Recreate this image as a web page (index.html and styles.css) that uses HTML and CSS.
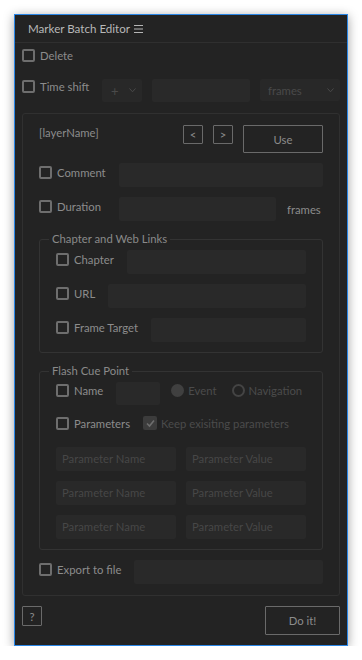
FILE: index.html
```html
<!DOCTYPE html>
<html>
<head>
<meta charset="utf-8">
<link rel="stylesheet" href="styles.css">
</head>
<body>
<div class="window">
  <div class="titlebar">
    <span class="title">Marker Batch Editor</span>
    <svg class="menu-icon" width="9" height="8" viewBox="0 0 9 8"><path d="M0 0.5H9M0 4H9M0 7.5H9" stroke="#b5b5b5" stroke-width="1"/></svg>
  </div>
  <div class="content">
    <div class="row row-delete"><span class="cb"></span><span class="lbl">Delete</span></div>
    <div class="row row-shift">
      <span class="cb"></span><span class="lbl lbl-shift">Time shift</span>
      <div class="dd dd-sign"><span>+</span><svg width="7" height="5" viewBox="0 0 7 5"><path d="M0.5 0.5L3.5 3.8L6.5 0.5" fill="none" stroke="#4a4a4a" stroke-width="1"/></svg></div>
      <div class="field field-shift"></div>
      <div class="dd dd-unit"><span>frames</span><svg width="7" height="5" viewBox="0 0 7 5"><path d="M0.5 0.5L3.5 3.8L6.5 0.5" fill="none" stroke="#4a4a4a" stroke-width="1"/></svg></div>
    </div>

    <div class="panel">
      <div class="head">
        <span class="layer">[layerName]</span>
        <button class="btn btn-sm">&lt;</button>
        <button class="btn btn-sm">&gt;</button>
        <button class="btn btn-use">Use</button>
      </div>
      <div class="frow"><span class="cb"></span><span class="lbl lbl-w">Comment</span><div class="field"></div></div>
      <div class="frow"><span class="cb"></span><span class="lbl lbl-w">Duration</span><div class="field field-dur"></div><span class="unit">frames</span></div>

      <fieldset class="group group-chapter">
        <legend>Chapter and Web Links</legend>
        <div class="frow first"><span class="cb"></span><span class="lbl">Chapter</span><div class="field"></div></div>
        <div class="frow"><span class="cb"></span><span class="lbl">URL</span><div class="field"></div></div>
        <div class="frow"><span class="cb"></span><span class="lbl">Frame Target</span><div class="field"></div></div>
      </fieldset>

      <fieldset class="group group-flash">
        <legend>Flash Cue Point</legend>
        <div class="frow first row-name">
          <span class="cb"></span><span class="lbl">Name</span><div class="field field-name"></div>
          <span class="radio radio-on"></span><span class="dis lbl-event">Event</span>
          <span class="radio radio-nav"></span><span class="dis lbl-nav">Navigation</span>
        </div>
        <div class="row row-params">
          <span class="cb"></span><span class="lbl">Parameters</span>
          <span class="cb-checked"><svg width="11" height="11" viewBox="0 0 11 11"><path d="M2 5.5L4.5 8L9 2.5" fill="none" stroke="#6e6e6e" stroke-width="1.6"/></svg></span>
          <span class="dis lbl-keep">Keep exisiting parameters</span>
        </div>
        <div class="params">
          <div class="field ph">Parameter Name</div><div class="field ph">Parameter Value</div>
          <div class="field ph">Parameter Name</div><div class="field ph">Parameter Value</div>
          <div class="field ph">Parameter Name</div><div class="field ph">Parameter Value</div>
        </div>
      </fieldset>

      <div class="frow row-export"><span class="cb"></span><span class="lbl">Export to file</span><div class="field"></div></div>
    </div>

    <div class="footer">
      <button class="btn btn-help">?</button>
      <button class="btn btn-do">Do it!</button>
    </div>
  </div>
</div>
</body>
</html>
```
FILE: styles.css
```css
body {
  margin: 0;
  background: #ffffff;
  font-family: Lato, "Liberation Sans", sans-serif;
  font-size: 11.3px;
}

.window {
  margin: 14px 0 0 14px;
  width: 332px;
  height: 630px;
  border: 1px solid #2a86e6;
  background: #232323;
  box-shadow: 0 2px 10px rgba(0, 0, 0, 0.38);
}

.titlebar {
  height: 27px;
  border-bottom: 1px solid #2f2f2f;
  padding-left: 13px;
  display: flex;
  align-items: center;
  gap: 4px;
  color: #b8b8b8;
  font-size: 11.6px;
}

.menu-icon {
  display: block;
  margin-top: 1px;
}

.content {
  padding: 0 7px;
}

.row {
  display: flex;
  align-items: flex-start;
}

.cb {
  width: 13px;
  height: 13px;
  box-sizing: border-box;
  border: 2px solid #6e6e6e;
  border-radius: 2px;
  flex: none;
}

.lbl {
  margin-left: 5px;
  line-height: 13px;
  color: #8c8c8c;
  white-space: nowrap;
}

.row-delete {
  margin-top: 6px;
  height: 13px;
}

.row-shift {
  margin-top: 17px;
  height: 23px;
}

.row-shift .cb,
.row-shift .lbl {
  margin-top: 1px;
}

.lbl-shift {
  width: 62px;
  flex: none;
}

.dd {
  display: flex;
  align-items: center;
  justify-content: space-between;
  background: #282828;
  border-radius: 2px;
  color: #4a4a4a;
  box-sizing: border-box;
  flex: none;
}

.dd svg {
  display: block;
}

.dd-sign {
  width: 40px;
  height: 23px;
  padding: 0 6px 0 9px;
  font-size: 13px;
}

.field {
  background: #292929;
  border-radius: 2px;
  height: 24px;
  flex: 1;
  margin-left: 13px;
  box-sizing: border-box;
}

.field-shift {
  flex: none;
  width: 98px;
  height: 23px;
  margin-left: 10px;
}

.dd-unit {
  margin-left: 10px;
  width: 80px;
  height: 22px;
  padding: 0 6px 0 8px;
}

.panel {
  margin-top: 11px;
  border: 1px solid #303030;
  border-radius: 3px;
  padding: 0 16px 11px 16px;
}

.head {
  margin-top: 11px;
  height: 28px;
  display: flex;
  align-items: flex-start;
}

.layer {
  flex: 1;
  line-height: 16px;
  color: #8c8c8c;
}

.btn {
  background: transparent;
  border: 1px solid #6a6a6a;
  border-radius: 1px;
  color: #8c8c8c;
  font-family: inherit;
  font-size: 11.3px;
  padding: 0;
  margin: 0;
  box-sizing: border-box;
  flex: none;
}

.btn-sm {
  width: 20px;
  height: 19px;
  margin-left: 10px;
  line-height: 16px;
}

.btn-use {
  width: 80px;
  height: 28px;
  margin-left: 10px;
}

.frow {
  display: flex;
  align-items: flex-start;
  margin-top: 10px;
}

.frow.first {
  margin-top: 0;
}

.frow .cb,
.frow .lbl {
  margin-top: 3px;
}

.lbl-w {
  width: 49px;
  flex: none;
}

.field-dur {
  flex: none;
  width: 157px;
}

.unit {
  margin-left: 11px;
  align-self: center;
  color: #8c8c8c;
}

.group {
  margin: 11px 0 0 0;
  border: 1px solid #333333;
  border-radius: 3px;
  padding: 4px 16px 10px 16px;
  min-width: 0;
}

.group legend {
  padding: 0 3px;
  margin-left: -7px;
  line-height: 14px;
  color: #8a8a8a;
}

.group-flash {
  margin-top: 11px;
}

.row-name .cb,
.row-name .lbl {
  margin-top: 2px;
}

.field-name {
  flex: none;
  width: 44px;
  height: 23px;
}

.radio {
  width: 13px;
  height: 13px;
  box-sizing: border-box;
  border-radius: 50%;
  margin-top: 2px;
  flex: none;
}

.radio-on {
  margin-left: 11px;
  background: #404040;
}

.radio-nav {
  margin-left: 15px;
  border: 2px solid #444444;
}

.dis {
  color: #4b4b4b;
  white-space: nowrap;
  line-height: 13px;
  margin-top: 2px;
}

.lbl-event,
.lbl-nav {
  margin-left: 4px;
}

.row-params {
  margin-top: 12px;
  height: 13px;
}

.cb-checked {
  width: 14px;
  height: 14px;
  margin-left: 13px;
  margin-top: -1px;
  background: #3c3c3c;
  border-radius: 2px;
  display: flex;
  align-items: center;
  justify-content: center;
  flex: none;
}

.cb-checked svg {
  display: block;
}

.lbl-keep {
  margin-left: 4px;
  margin-top: 0;
}

.params {
  margin-top: 17px;
  display: grid;
  grid-template-columns: 120px 120px;
  column-gap: 10px;
  row-gap: 10px;
}

.params .field {
  margin-left: 0;
  padding-left: 6px;
  line-height: 24px;
  color: #474747;
  white-space: nowrap;
}

.row-export {
  margin-top: 10px;
}

.footer {
  margin-top: 10px;
  display: flex;
  justify-content: space-between;
  align-items: flex-start;
}

.btn-help {
  width: 20px;
  height: 20px;
}

.btn-do {
  width: 75px;
  height: 29px;
}
```
